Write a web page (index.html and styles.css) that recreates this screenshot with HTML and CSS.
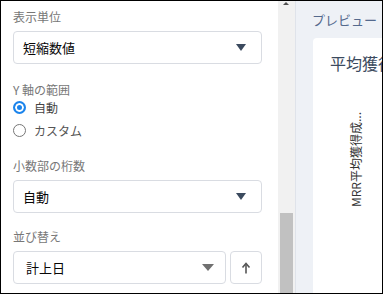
FILE: index.html
```html
<!DOCTYPE html>
<html lang="ja">
<head>
    <meta charset="utf-8">
    <title>グラフ設定</title>
    <link rel="stylesheet" href="styles.css">
</head>
<body>
    <div class="frame">
        <div class="settings">
            <div class="field">
                <div class="field-label">表示単位</div>
                <div class="select">
                    <span>短縮数値</span>
                    <span class="caret"></span>
                </div>
            </div>

            <div class="field">
                <div class="field-label tight">Y 軸の範囲</div>
                <div class="radio-row">
                    <span class="radio checked"></span>
                    <span class="radio-text">自動</span>
                </div>
                <div class="radio-row second">
                    <span class="radio"></span>
                    <span class="radio-text muted">カスタム</span>
                </div>
            </div>

            <div class="field">
                <div class="field-label">小数部の桁数</div>
                <div class="select">
                    <span>自動</span>
                    <span class="caret"></span>
                </div>
            </div>

            <div class="field field-sort">
                <div class="field-label">並び替え</div>
                <div class="sort-row">
                    <div class="select select-sort">
                        <span>計上日</span>
                        <span class="caret caret-gray"></span>
                    </div>
                    <button class="sort-btn">
                        <svg width="10" height="12" viewBox="0 0 10 12">
                            <path d="M5 11.5V2.5" stroke="#555" stroke-width="1.6" fill="none"/>
                            <path d="M1.5 5.5L5 1.5L8.5 5.5" stroke="#555" stroke-width="1.6" fill="none"/>
                        </svg>
                    </button>
                </div>
            </div>
        </div>

        <div class="scrollbar">
            <span class="scroll-up"></span>
            <span class="scroll-thumb"></span>
        </div>

        <div class="preview">
            <div class="preview-title">プレビュー</div>
            <div class="card">
                <div class="card-title">平均獲得成約額の推移</div>
                <div class="axis-label">MRR平均獲得成...</div>
            </div>
        </div>
    </div>
</body>
</html>
```

FILE: styles.css
```css
body {
    margin: 0;
    font-family: "Noto Sans CJK JP", "Noto Sans", sans-serif;
    color: #333;
    background-color: #fff;
}

.frame {
    width: 383px;
    height: 294px;
    box-sizing: border-box;
    border: 1px solid #000;
    display: flex;
    overflow: hidden;
}

/* left settings panel */
.settings {
    width: 277px;
    flex-shrink: 0;
    box-sizing: border-box;
    padding: 7px 16px 0 12px;
    background-color: #fff;
}

.field + .field {
    margin-top: 18px;
}

.field-sort {
    margin-top: 15px !important;
}

.field-label {
    font-size: 12px;
    line-height: 18px;
    color: #777;
    margin-bottom: 5px;
}

.field-label.tight {
    line-height: 16px;
    margin-bottom: 0;
}

.select {
    height: 33px;
    box-sizing: border-box;
    border: 1px solid #d9dce2;
    border-radius: 4px;
    display: flex;
    align-items: center;
    justify-content: space-between;
    padding: 0 15px 0 9px;
    font-size: 13px;
    color: #080707;
}

.select-sort {
    flex: 1;
    padding-left: 12px;
    padding-right: 11px;
}

.caret {
    width: 0;
    height: 0;
    border-left: 5px solid transparent;
    border-right: 5px solid transparent;
    border-top: 7px solid #3b4a5e;
}

.caret-gray {
    border-left-width: 6px;
    border-right-width: 6px;
    border-top-color: #707070;
}

.radio-row {
    height: 18px;
    display: flex;
    align-items: center;
}

.radio-row.second {
    margin-top: 5px;
}

.radio {
    width: 13px;
    height: 13px;
    box-sizing: border-box;
    border-radius: 50%;
    border: 1px solid #767676;
    background-color: #fff;
}

.radio.checked {
    border: 2px solid #1b84ec;
    background-color: #1b84ec;
    box-shadow: inset 0 0 0 2px #fff;
}

.radio-text {
    margin-left: 8px;
    font-size: 12px;
    color: #444;
}

.radio-text.muted {
    color: #555;
}

.sort-row {
    display: flex;
    gap: 4px;
}

.sort-btn {
    width: 32px;
    height: 33px;
    padding: 0;
    border: 1px solid #d9dce2;
    border-radius: 4px;
    background-color: #fff;
    display: flex;
    align-items: center;
    justify-content: center;
}

/* scrollbar */
.scrollbar {
    width: 17px;
    flex-shrink: 0;
    background-color: #f1f1f1;
    position: relative;
}

.scroll-up {
    position: absolute;
    top: 1px;
    left: 5px;
    width: 0;
    height: 0;
    border-left: 3px solid transparent;
    border-right: 3px solid transparent;
    border-bottom: 3px solid #505050;
}

.scroll-thumb {
    position: absolute;
    top: 212px;
    left: 2px;
    width: 13px;
    bottom: 0;
    background-color: #c1c1c1;
}

/* preview panel */
.preview {
    flex: 1;
    border-left: 1px solid #dfe3ea;
    background-color: #eef1f6;
    padding: 10px 0 0 16px;
    overflow: hidden;
}

.preview-title {
    font-size: 13px;
    line-height: 18px;
    color: #54698d;
    margin-bottom: 9px;
    white-space: nowrap;
}

.card {
    width: 300px;
    height: 300px;
    margin-left: 1px;
    box-sizing: border-box;
    background-color: #fff;
    border-radius: 4px;
    padding: 14px 0 0 17px;
}

.card-title {
    font-size: 16px;
    line-height: 22px;
    color: #3b4a5e;
    white-space: nowrap;
}

.axis-label {
    margin-top: 38px;
    margin-left: 19px;
    font-size: 12px;
    line-height: 14px;
    color: #333;
    writing-mode: vertical-rl;
    text-orientation: sideways;
    transform: rotate(180deg);
    white-space: nowrap;
}
```
